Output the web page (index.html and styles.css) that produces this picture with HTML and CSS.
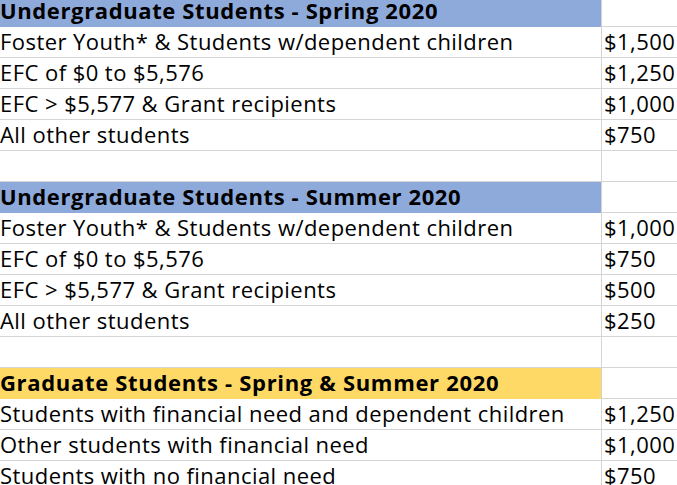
FILE: index.html
```html
<!DOCTYPE html>
<html>
<head>
<meta charset="utf-8">
<link rel="stylesheet" href="styles.css">
</head>
<body>
<div class="sheet">
  <div class="row head blue"><div class="label">Undergraduate Students - Spring 2020</div><div class="val"></div></div>
  <div class="row"><div class="label">Foster Youth* &amp; Students w/dependent children</div><div class="val">$1,500</div></div>
  <div class="row"><div class="label">EFC of $0 to $5,576</div><div class="val">$1,250</div></div>
  <div class="row"><div class="label">EFC &gt; $5,577 &amp; Grant recipients</div><div class="val">$1,000</div></div>
  <div class="row"><div class="label">All other students</div><div class="val">$750</div></div>
  <div class="row"><div class="label"></div><div class="val"></div></div>
  <div class="row head blue"><div class="label">Undergraduate Students - Summer 2020</div><div class="val"></div></div>
  <div class="row"><div class="label">Foster Youth* &amp; Students w/dependent children</div><div class="val">$1,000</div></div>
  <div class="row"><div class="label">EFC of $0 to $5,576</div><div class="val">$750</div></div>
  <div class="row"><div class="label">EFC &gt; $5,577 &amp; Grant recipients</div><div class="val">$500</div></div>
  <div class="row"><div class="label">All other students</div><div class="val">$250</div></div>
  <div class="row"><div class="label"></div><div class="val"></div></div>
  <div class="row head gold"><div class="label">Graduate Students - Spring &amp; Summer 2020</div><div class="val"></div></div>
  <div class="row"><div class="label">Students with financial need and dependent children</div><div class="val">$1,250</div></div>
  <div class="row"><div class="label">Other students with financial need</div><div class="val">$1,000</div></div>
  <div class="row"><div class="label">Students with no financial need</div><div class="val">$750</div></div>
</div>
</body>
</html>
```

FILE: styles.css
```css
html, body {
  margin: 0;
  padding: 0;
  background: #ffffff;
  overflow: hidden;
}
.sheet {
  margin-top: -4px;
  font-family: "Open Sans", Lato, sans-serif;
  font-size: 22px;
  letter-spacing: 0.45px;
  color: #000000;
}
.row {
  display: grid;
  grid-template-columns: 601px 1fr;
  height: 31px;
}
.label, .val {
  box-sizing: border-box;
  height: 31px;
  border-bottom: 1px solid #d4d4d4;
  line-height: 29px;
  white-space: nowrap;
  overflow: hidden;
}
.label {
  padding-left: 0;
}
.val {
  border-left: 1px solid #d4d4d4;
  padding-left: 2px;
}
.head .label {
  font-weight: bold;
  letter-spacing: 0.62px;
  border-bottom-color: transparent;
  line-height: 28px;
}
.gold .label {
  background: #ffd966;
  letter-spacing: 0.68px;
}
.blue .label {
  background: #8eaadb;
}
```
